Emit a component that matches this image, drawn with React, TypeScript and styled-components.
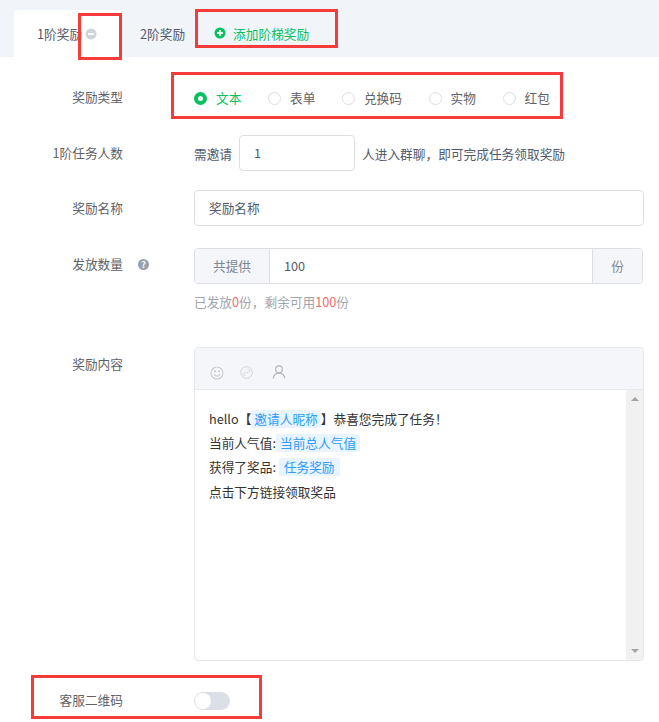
import { FC } from "react";
import styled, { createGlobalStyle } from "styled-components";

const GlobalStyle = createGlobalStyle`
  html, body {
    margin: 0;
    padding: 0;
    background: #fff;
    font-family: "Noto Sans CJK SC", "Noto Sans", sans-serif;
    font-size: 12.7px;
    color: #515a6e;
  }
`;

const Page = styled.div`
  position: relative;
  width: 659px;
  height: 722px;
  overflow: hidden;
`;

const TabBar = styled.div`
  display: flex;
  align-items: flex-end;
  height: 57px;
  padding-left: 14px;
  background: #f1f4f9;
`;

const Tab = styled.div<{ $active?: boolean }>`
  display: flex;
  align-items: center;
  height: 47px;
  box-sizing: border-box;
  padding-bottom: 1px;
  background: ${(p) => (p.$active ? "#fff" : "transparent")};
  color: #515a6e;
`;

const FirstTab = styled(Tab)`
  width: 106px;
  padding-left: 23px;
  gap: 3px;

  svg {
    margin-top: 2px;
  }
`;

const SecondTab = styled(Tab)`
  padding-left: 20px;
`;

const AddTab = styled(Tab)`
  padding-left: 29px;
  gap: 7px;
  color: #07c160;
`;

const Form = styled.div`
  display: flex;
  flex-direction: column;
`;

const Row = styled.div<{ $top: number }>`
  display: flex;
  align-items: center;
  height: 36px;
  margin-top: ${(p) => p.$top}px;
`;

const TopRow = styled.div<{ $top: number }>`
  display: flex;
  align-items: flex-start;
  margin-top: ${(p) => p.$top}px;
`;

const Label = styled.div<{ $lift?: number }>`
  position: relative;
  flex: none;
  width: 123px;
  margin-right: 71px;
  margin-bottom: ${(p) => (p.$lift ?? 0) * 2}px;
  text-align: right;
  line-height: ${(p) => 36 - (p.$lift ?? 0) * 2}px;
  color: #606266;
`;

const HelpDot = styled.span`
  position: absolute;
  left: 138px;
  top: 11px;
  width: 11px;
  height: 11px;
  border-radius: 50%;
  background: #9a9fb0;
  color: #fff;
  font-size: 9px;
  font-weight: 700;
  line-height: 11px;
  text-align: center;
`;

const RadioGroup = styled.div`
  display: flex;
  align-items: center;
  gap: 26.6px;
`;

const RadioItem = styled.div<{ $checked?: boolean }>`
  display: flex;
  align-items: center;
  gap: 9px;
  color: ${(p) => (p.$checked ? "#07c160" : "#606266")};
`;

const RadioDot = styled.span<{ $checked?: boolean }>`
  box-sizing: border-box;
  width: 13px;
  height: 13px;
  margin-top: 2px;
  border-radius: 50%;
  border: ${(p) => (p.$checked ? "4px solid #07c160" : "1px solid #dcdee6")};
  background: #fff;
`;

const Plain = styled.span`
  color: #515a6e;
`;

const Input = styled.div<{ $width?: number }>`
  box-sizing: border-box;
  width: ${(p) => (p.$width ? `${p.$width}px` : "450px")};
  height: 36px;
  padding-left: 14px;
  border: 1px solid #dcdee2;
  border-radius: 4px;
  background: #fff;
  line-height: 34px;
  color: #515a6e;
`;

const InviteInput = styled(Input)`
  margin: 0 7px;
`;

const Group = styled.div`
  display: flex;
  box-sizing: border-box;
  width: 449px;
  height: 36px;
  border: 1px solid #dcdee2;
  border-radius: 4px;
  line-height: 34px;
  overflow: hidden;
`;

const Addon = styled.div<{ $width: number; $side: "left" | "right" }>`
  flex: none;
  width: ${(p) => p.$width}px;
  background: #f5f6fa;
  color: #808695;
  text-align: center;
  ${(p) => (p.$side === "left" ? "border-right" : "border-left")}: 1px solid #dcdee2;
  box-sizing: border-box;
`;

const GroupValue = styled.div`
  flex: 1;
  padding-left: 14px;
  color: #515a6e;
`;

const Hint = styled.div`
  margin: 9px 0 0 194px;
  line-height: 18px;
  color: #a0a4ae;
`;

const Red = styled.span`
  color: #f56c6c;
`;

const Editor = styled.div`
  box-sizing: border-box;
  width: 450px;
  height: 314px;
  border: 1px solid #e4e6ec;
  border-radius: 4px;
  overflow: hidden;
  display: flex;
  flex-direction: column;
`;

const EditorTools = styled.div`
  flex: none;
  display: flex;
  align-items: center;
  gap: 16px;
  height: 42px;
  padding: 8px 0 0 15px;
  box-sizing: border-box;
  background: #f5f6fa;
  border-bottom: 1px solid #e8eaef;
`;

const UserSlot = styled.span`
  display: flex;
  margin: -1px 0 0 3px;
`;

const EditorBody = styled.div`
  flex: 1;
  display: flex;
  min-height: 0;
`;

const EditorText = styled.div`
  flex: 1;
  padding: 16.5px 0 0 14px;
  color: #333;
  line-height: 24.4px;
`;

const Tag = styled.span<{ $pad?: number }>`
  display: inline-block;
  height: 18px;
  line-height: 18px;
  padding: 0 ${(p) => p.$pad ?? 5}px;
  border-radius: 2px;
  background: #e8f4ff;
  color: #2d9bff;
`;

const Scrollbar = styled.div`
  flex: none;
  width: 17px;
  background: #f1f1f1;
  display: flex;
  flex-direction: column;
  justify-content: space-between;
  align-items: center;
  padding: 7px 0;
  box-sizing: border-box;
`;

const Arrow = styled.span<{ $down?: boolean }>`
  width: 0;
  height: 0;
  border-left: 4px solid transparent;
  border-right: 4px solid transparent;
  ${(p) => (p.$down ? "border-top" : "border-bottom")}: 4px solid #a3a3a3;
`;

const Toggle = styled.div`
  position: relative;
  width: 36px;
  height: 18px;
  border-radius: 9px;
  background: #dcdfe6;
`;

const Knob = styled.span`
  position: absolute;
  left: 1px;
  top: 1px;
  width: 16px;
  height: 16px;
  border-radius: 50%;
  background: #fff;
`;

const Mark = styled.div<{ $x: number; $y: number; $w: number; $h: number }>`
  position: absolute;
  left: ${(p) => p.$x}px;
  top: ${(p) => p.$y}px;
  width: ${(p) => p.$w}px;
  height: ${(p) => p.$h}px;
  box-sizing: border-box;
  border: 3px solid #f73b3b;
  pointer-events: none;
`;

const CircleSign: FC<{ color: string; plus?: boolean }> = ({ color, plus }) => (
  <svg width="12" height="12" viewBox="0 0 12 12">
    <circle cx="6" cy="6" r="5.5" fill={color} />
    <rect x="3" y="5.1" width="6" height="1.8" fill="#fff" />
    {plus && <rect x="5.1" y="3" width="1.8" height="6" fill="#fff" />}
  </svg>
);

const SmileIcon = () => (
  <svg width="14" height="14" viewBox="0 0 14 14" fill="none" stroke="#c9ccd2" strokeWidth="1.1">
    <circle cx="7" cy="7" r="6" />
    <path d="M4 8.2c.7 1.3 1.7 1.9 3 1.9s2.3-.6 3-1.9" />
    <circle cx="5" cy="5.3" r=".5" fill="#c9ccd2" />
    <circle cx="9" cy="5.3" r=".5" fill="#c9ccd2" />
  </svg>
);

const LinkIcon = () => (
  <svg width="13" height="13" viewBox="0 0 13 13" fill="none" stroke="#d2d4da" strokeWidth="1">
    <circle cx="6.5" cy="6.5" r="5.8" />
    <path d="M5.5 8.8l-.6.5a1.2 1.2 0 0 1-1.5-1.7l1.1-1.1a1.2 1.2 0 0 1 1.7 0" />
    <path d="M7.5 4.2l.6-.5a1.2 1.2 0 0 1 1.5 1.7L8.5 6.5a1.2 1.2 0 0 1-1.7 0" />
  </svg>
);

const UserIcon = () => (
  <svg width="14" height="14" viewBox="0 0 14 14" fill="none" stroke="#b4b7be" strokeWidth="1.2">
    <circle cx="7" cy="4.3" r="3.4" />
    <path d="M1.2 13.5c.4-3.3 2.7-5.4 5.8-5.4s5.4 2.1 5.8 5.4" />
  </svg>
);

const radios = ["文本", "表单", "兑换码", "实物", "红包"];

export default function App() {
  return (
    <Page>
      <GlobalStyle />
      <TabBar>
        <FirstTab $active>
          1阶奖励
          <CircleSign color="#cfd3dc" />
        </FirstTab>
        <SecondTab>2阶奖励</SecondTab>
        <AddTab>
          <CircleSign color="#07c160" plus />
          添加阶梯奖励
        </AddTab>
      </TabBar>
      <Form>
        <Row $top={22}>
          <Label>奖励类型</Label>
          <RadioGroup>
            {radios.map((r, i) => (
              <RadioItem key={r} $checked={i === 0}>
                <RadioDot $checked={i === 0} />
                {r}
              </RadioItem>
            ))}
          </RadioGroup>
        </Row>
        <Row $top={20}>
          <Label>1阶任务人数</Label>
          <Plain>需邀请</Plain>
          <InviteInput $width={116}>1</InviteInput>
          <Plain>人进入群聊，即可完成任务领取奖励</Plain>
        </Row>
        <Row $top={19}>
          <Label>奖励名称</Label>
          <Input>奖励名称</Input>
        </Row>
        <Row $top={22}>
          <Label $lift={2}>
            发放数量
            <HelpDot>?</HelpDot>
          </Label>
          <Group>
            <Addon $width={75} $side="left">共提供</Addon>
            <GroupValue>100</GroupValue>
            <Addon $width={50} $side="right">份</Addon>
          </Group>
        </Row>
        <Hint>
          已发放<Red>0</Red>份，剩余可用<Red>100</Red>份
        </Hint>
        <TopRow $top={36}>
          <Label $lift={1}>奖励内容</Label>
          <Editor>
            <EditorTools>
              <SmileIcon />
              <LinkIcon />
              <UserSlot>
                <UserIcon />
              </UserSlot>
            </EditorTools>
            <EditorBody>
              <EditorText>
                <div>
                  hello【<Tag $pad={3}>邀请人昵称</Tag>】恭喜您完成了任务！
                </div>
                <div>
                  当前人气值:<Tag $pad={4}>当前总人气值</Tag>
                </div>
                <div>
                  获得了奖品: <Tag>任务奖励</Tag>
                </div>
                <div>点击下方链接领取奖品</div>
              </EditorText>
              <Scrollbar>
                <Arrow />
                <Arrow $down />
              </Scrollbar>
            </EditorBody>
          </Editor>
        </TopRow>
        <Row $top={22}>
          <Label $lift={1}>客服二维码</Label>
          <Toggle>
            <Knob />
          </Toggle>
        </Row>
      </Form>
      <Mark $x={78} $y={13} $w={44} $h={47} />
      <Mark $x={195} $y={9} $w={143} $h={39} />
      <Mark $x={171} $y={72} $w={392} $h={47} />
      <Mark $x={31} $y={675} $w={231} $h={44} />
    </Page>
  );
}
